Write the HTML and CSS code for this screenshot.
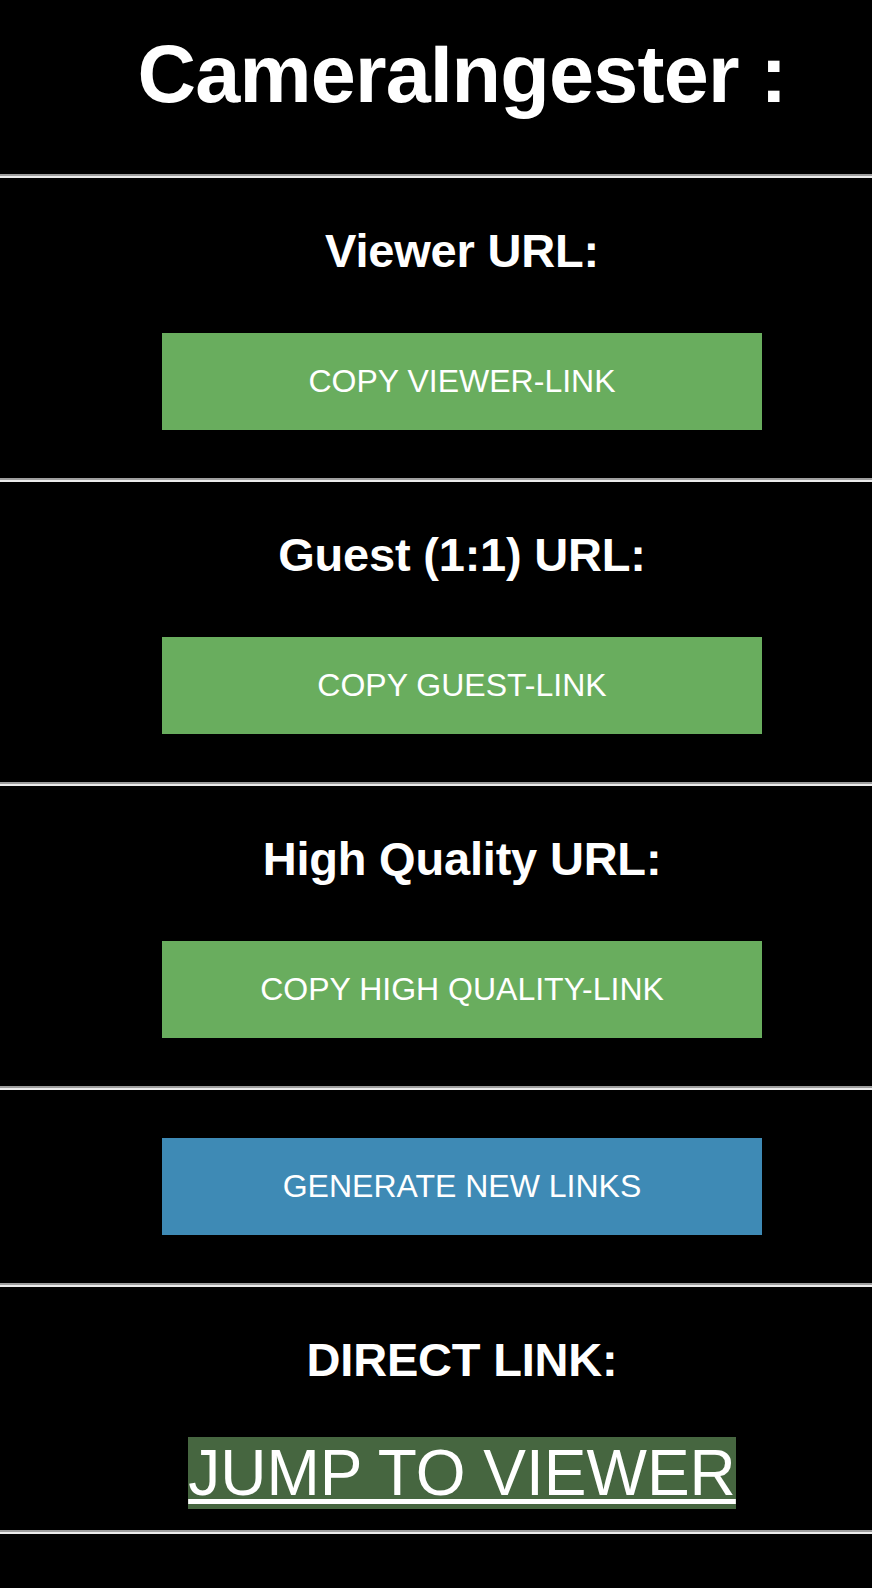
FILE: index.html
```html
<!DOCTYPE html>
<html lang="en">
<head>
<meta charset="utf-8">
<title>CameraIngester</title>
<link rel="stylesheet" href="styles.css">
</head>
<body>
<header class="header">
  <h1 class="title">CameraIngester :</h1>
</header>
<hr class="rule">
<section class="section">
  <h2 class="label">Viewer URL:</h2>
  <button class="btn btn-green" type="button">COPY VIEWER-LINK</button>
</section>
<hr class="rule">
<section class="section">
  <h2 class="label">Guest (1:1) URL:</h2>
  <button class="btn btn-green" type="button">COPY GUEST-LINK</button>
</section>
<hr class="rule">
<section class="section">
  <h2 class="label">High Quality URL:</h2>
  <button class="btn btn-green" type="button">COPY HIGH QUALITY-LINK</button>
</section>
<hr class="rule">
<section class="section section-plain">
  <button class="btn btn-blue" type="button">GENERATE NEW LINKS</button>
</section>
<hr class="rule">
<section class="section section-direct">
  <h2 class="label label-direct">DIRECT LINK:</h2>
  <div class="jump"><a class="jump-link" href="#">JUMP TO VIEWER</a></div>
</section>
<hr class="rule">
</body>
</html>
```
FILE: styles.css
```css
html, body {
  margin: 0;
  padding: 0;
  background: #000;
}
body {
  color: #fff;
  font-family: "Liberation Sans", Arial, Helvetica, sans-serif;
}
.header {
  padding: 28px 0 53px 52px;
  text-align: center;
}
.title {
  margin: 0;
  font-size: 81px;
  line-height: 93px;
  font-weight: bold;
  letter-spacing: -0.8px;
}
.rule {
  margin: 0;
  height: 0;
  border: 0;
  border-top: 2px solid #9d9d9d;
  border-bottom: 2px solid #ebebeb;
}
.section {
  padding: 46px 0 48px 52px;
  text-align: center;
}
.section-plain {
  padding-top: 48px;
}
.section-direct {
  padding-bottom: 20px;
}
.label {
  margin: 0 0 55px;
  font-size: 47px;
  line-height: 54px;
  font-weight: bold;
  letter-spacing: -0.2px;
}
.label-direct {
  margin-bottom: 49px;
}
.btn {
  display: flex;
  align-items: center;
  justify-content: center;
  width: 600px;
  height: 97px;
  margin: 0 auto;
  padding: 0;
  border: 0;
  color: #fff;
  font-family: "Liberation Sans", Arial, Helvetica, sans-serif;
  font-size: 32px;
  cursor: pointer;
}
.btn-green {
  background: #69ad5e;
}
.btn-blue {
  background: #3e8ab5;
}
.jump {
  font-size: 64px;
  line-height: normal;
}
.jump-link {
  background: #466640;
  color: #fff;
  text-decoration: underline;
  text-decoration-thickness: 5px;
  text-underline-offset: 4px;
}
```
